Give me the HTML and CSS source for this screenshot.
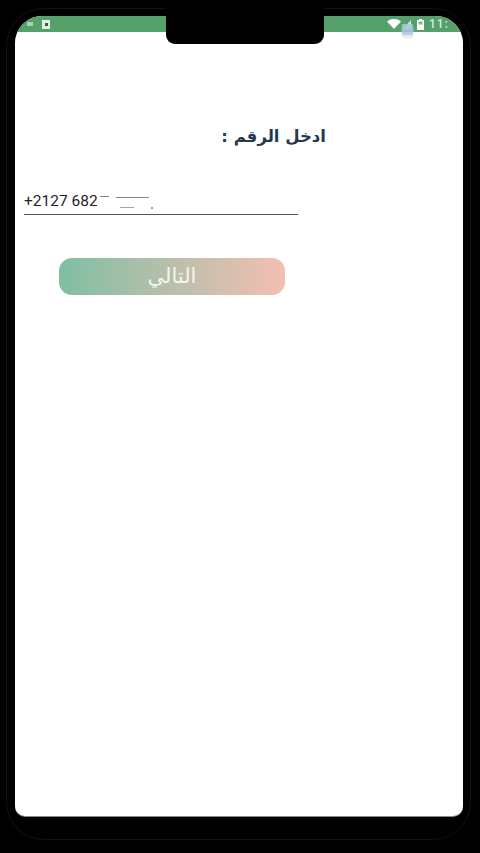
FILE: index.html
```html
<!DOCTYPE html>
<html lang="ar">
<head>
<meta charset="utf-8">
<title>ادخل الرقم</title>
<link rel="stylesheet" href="styles.css">
</head>
<body>
<div class="device">
  <div class="notch"></div>
  <div class="screen">
    <div class="status">
      <div class="status-left">
        <span class="status-chip"></span>
        <span class="status-box"><span class="status-dot"></span></span>
      </div>
      <div class="status-right">
        <svg class="wifi" viewBox="0 0 14 10" width="14" height="10"><path d="M0 2.5C4 -.8 10 -.8 14 2.5L7 10Z" fill="#fff"/></svg>
        <svg class="signal" viewBox="0 0 8 9" width="8" height="9"><path d="M8 0V9H0Z" fill="#d6e8da"/></svg>
        <svg class="battery" viewBox="0 0 7 11" width="7" height="11"><path d="M2 0H5V1H7V11H0V1H2Z" fill="#fff"/><rect x="1.5" y="2.5" width="4" height="3" fill="#7fb58f"/></svg>
        <span class="time">11:</span>
      </div>
    </div>
    <main class="content">
      <h1 class="title" dir="rtl">ادخل الرقم :</h1>
      <div class="field">
        <span class="phone">+2127 682</span>
        <span class="redact">
          <span class="mark mark-a"></span>
          <span class="mark-col">
            <span class="mark mark-b"></span>
            <span class="mark mark-c"></span>
          </span>
          <span class="mark mark-d"></span>
        </span>
      </div>
      <button class="next" type="button">التالي</button>
    </main>
  </div>
  <div class="sim"></div>
  <div class="chin"></div>
</div>
</body>
</html>
```
FILE: styles.css
```css
* { box-sizing: border-box; }
html, body { margin: 0; height: 100%; background: #000; }
body { width: 480px; height: 853px; overflow: hidden; font-family: Roboto, "DejaVu Sans", sans-serif; }

.device {
  position: relative;
  width: 480px;
  height: 853px;
  padding: 16px 17px 0 15px;
  display: flex;
  flex-direction: column;
}
.device::before {
  content: "";
  position: absolute;
  left: 6px;
  right: 9px;
  top: 8px;
  height: 830px;
  border: 1px solid #121212;
  border-radius: 38px;
  pointer-events: none;
}

.notch {
  position: absolute;
  left: 166px;
  top: 0;
  width: 158px;
  height: 44px;
  background: #000;
  border-radius: 0 0 9px 9px;
  z-index: 2;
}

.screen {
  position: relative;
  height: 800px;
  background: #fff;
  border-radius: 27px 27px 10px 10px;
  overflow: hidden;
  display: flex;
  flex-direction: column;
  box-shadow: 0 1px 0 #888;
}

.status {
  height: 16px;
  flex: none;
  background: #55a06b;
  display: flex;
  justify-content: space-between;
  align-items: center;
  padding: 0 0 0 12px;
}
.status-left { display: flex; align-items: center; gap: 9px; }
.status-chip { width: 6px; height: 4px; background: #a9d2b4; }
.status-box {
  width: 8px;
  height: 9px;
  background: #e4efe6;
  display: flex;
  align-items: center;
  justify-content: center;
}
.status-dot { width: 3px; height: 3px; background: #2f5f40; }
.status-right { display: flex; align-items: center; margin-right: -6px; width: 82px; }
.wifi { margin-right: 2px; }
.signal { margin-right: 6px; }
.battery { margin-right: 5px; }
.time {
  color: #d9ebdd;
  font-size: 12px;
  font-weight: 500;
  letter-spacing: 1px;
  line-height: 16px;
  white-space: nowrap;
}

.content {
  flex: 1;
  display: flex;
  flex-direction: column;
  padding: 91px 0 0 9px;
}
.title {
  margin: 0;
  width: 302px;
  height: 28px;
  font-family: "DejaVu Sans", sans-serif;
  font-size: 16.5px;
  font-weight: 700;
  line-height: 28px;
  color: #26384b;
  text-align: right;
  white-space: nowrap;
  align-self: flex-start;
}
.field {
  margin-top: 40px;
  width: 274px;
  height: 24px;
  border-bottom: 1px solid #4a5560;
  display: flex;
  align-items: flex-start;
}
.phone {
  width: 73px;
  overflow: hidden;
  font-size: 15.5px;
  font-weight: 400;
  line-height: 20px;
  color: #1f2327;
  white-space: nowrap;
}
.redact { display: flex; align-items: flex-start; margin-left: 3px; padding-top: 5px; }
.mark { display: block; height: 1px; background: #7d8791; }
.mark-a { width: 9px; margin-right: 7px; }
.mark-col { display: flex; flex-direction: column; gap: 9px; width: 33px; }
.mark-b { width: 33px; margin-top: 1px; }
.mark-c { width: 14px; margin-left: 4px; background: #9aa5ae; }
.mark-d { width: 2px; height: 2px; margin: 11px 0 0 2px; background: #9aa5ae; }

.next {
  align-self: flex-start;
  margin: 43px 0 0 35px;
  width: 226px;
  height: 37px;
  border: 0;
  border-radius: 13px;
  padding: 0;
  background: linear-gradient(90deg, #7fbfa2 0%, #aebfa9 40%, #f4bfb2 100%);
  color: #f3f5f0;
  font-family: "DejaVu Sans", sans-serif;
  font-size: 21px;
  line-height: 33px;
}

.sim {
  position: absolute;
  left: 402px;
  top: 24px;
  width: 11px;
  height: 11px;
  background: #a9c6dd;
  border-radius: 1px;
  opacity: .85;
  box-shadow: 0 3px 2px #dfe9f1;
}
.chin { flex: 1; }
```
